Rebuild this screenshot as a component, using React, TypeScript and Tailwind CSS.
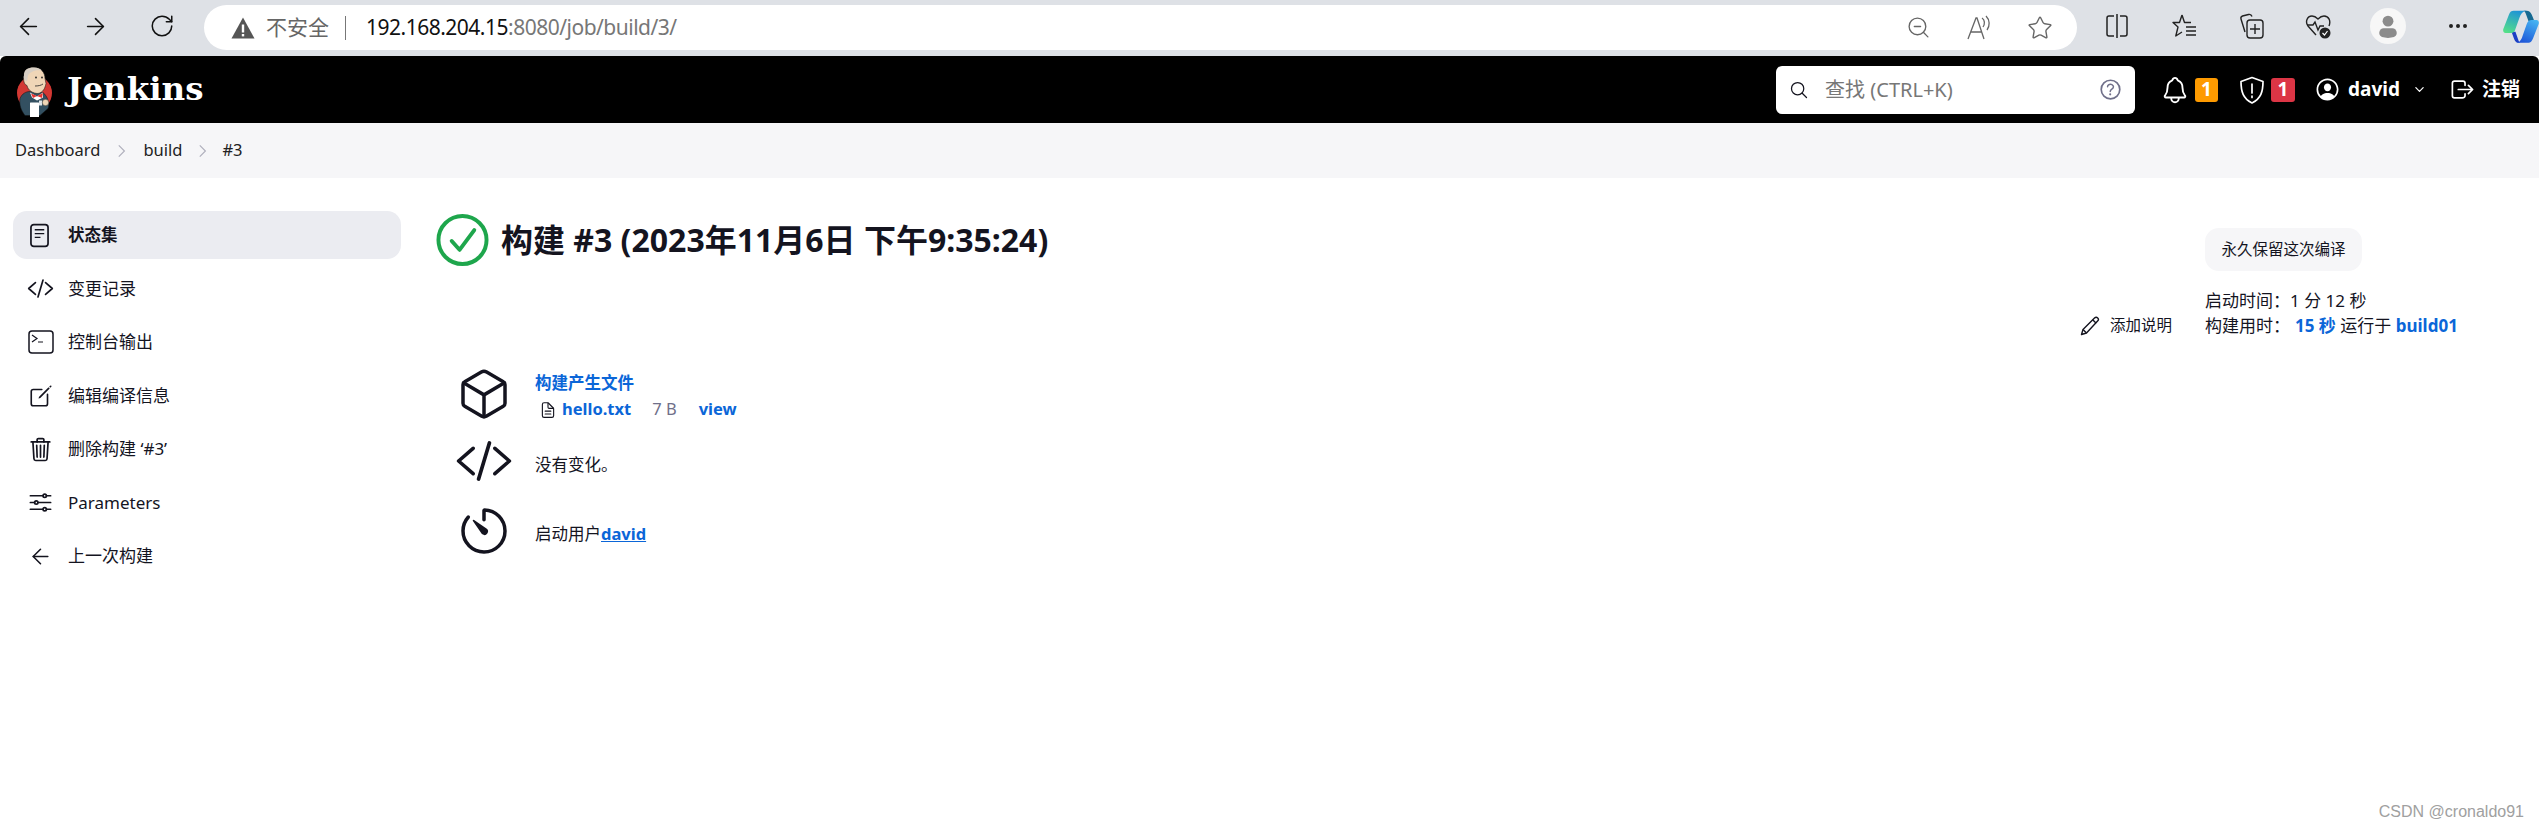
import { ArrowLeft, ArrowRight, RotateCw, ZoomOut, Star, MoreHorizontal } from "lucide-react";
import {
  IoCodeSlashOutline,
  IoCreateOutline,
  IoTrashOutline,
  IoOptionsOutline,
  IoCubeOutline,
  IoTimerOutline,
  IoSearchOutline,
  IoNotificationsOutline,
  IoPersonCircleOutline,
  IoChevronDownOutline,
  IoLogOutOutline,
  IoHelpCircleOutline,
  IoDocumentTextOutline,
} from "react-icons/io5";

const font = "font-['Noto_Sans','Noto_Sans_CJK_SC',sans-serif]";

function JenkinsLogo() {
  return (
    <svg viewBox="5 2.500 40 54" className="h-[54px] w-[40px]">
      <circle cx="24.500" cy="32.500" r="17.500" fill="#d33833" />
      <path d="M10 38c2-5 6-7 10-7l13 1c5 4 7 12 5 16l-8 7H15c-4-5-6-11-5-17z" fill="#335061" stroke="#111" strokeWidth=".5" />
      <path d="M14 15c0-6 4-8 10-8 7 0 11 5 11 11l1 5c-1 5-3 9-8 10-5 0-10-3-11-8-3-1-4-5-3-10z" fill="#f0d6b7" stroke="#222" strokeWidth=".6" />
      <path d="M14 15c0-6 4-8 10-8 3 0 6 1 8 3-6-1-12 1-14 5l-1 6c-2-1-4-3-3-6z" fill="#d8cfc4" />
      <circle cx="26" cy="17" r=".9" fill="#222" />
      <circle cx="32" cy="17" r=".9" fill="#222" />
      <path d="M25 25.500c3 0 6-.5 8-2" stroke="#222" strokeWidth=".8" fill="none" />
      <path d="M20 32l7 4 6-4v5l-6 3-5-3z" fill="#fff" />
      <path d="M21 33l6 2.500 6-3-1 5-5-2-4 2z" fill="#e8322e" />
      <rect x="20" y="42" width="9" height="15" rx=".5" fill="#fff" />
      <rect x="29" y="40" width="3" height="5" fill="#dfe5ea" />
      <circle cx="35.500" cy="42" r="3.200" fill="#f0d6b7" stroke="#222" strokeWidth=".4" />
    </svg>
  );
}

function Copilot() {
  return (
    <svg viewBox="0 0 110 100" className="h-[33px] w-[36px]">
      <defs>
        <linearGradient id="cpa" x1="0.600" y1="0" x2="0.200" y2="1">
          <stop offset="0" stopColor="#1f94d6" />
          <stop offset="1" stopColor="#55e088" />
        </linearGradient>
        <linearGradient id="cpb" x1="0.800" y1="0" x2="0.300" y2="1">
          <stop offset="0" stopColor="#45b4f2" />
          <stop offset="1" stopColor="#1d55d8" />
        </linearGradient>
      </defs>
      <path d="M62 2h10c8 0 12 4 16 12l8 20H78L70 12c-2-6-4-9-8-10z" fill="#176a92" />
      <path d="M26 66h12l10 28c1 3 4 6 8 6H48c-6 0-11-3-14-12z" fill="#1c3fc4" />
      <path d="M32 2h40C60 4 54 12 50 24L38 58c-2 8-6 12-14 12H8C2 70-1 64 1 58L18 14C22 5 26 2 32 2z" fill="url(#cpa)" />
      <path d="M78 100H40c12-2 16-10 20-22l12-34c3-10 8-14 16-14h14c6 0 9 6 7 12L92 86c-4 10-8 14-14 14z" fill="url(#cpb)" />
    </svg>
  );
}

function BrowserBar() {
  return (
    <div className="flex h-[56px] shrink-0 items-start bg-[#dee1e6] pl-[15px]">
      <div className="flex h-[52px] items-center gap-[40px] text-[#111]">
        <ArrowLeft size={27} strokeWidth={1.4} />
        <ArrowRight size={27} strokeWidth={1.4} />
        <RotateCw size={26} strokeWidth={1.4} />
      </div>
      <div className="ml-[29px] mt-[5px] flex h-[45px] w-[1873px] items-center rounded-full bg-white pl-[27px] pr-[24px]">
        <svg viewBox="0 0 24 24" className="h-[24px] w-[24px] text-[#555]" fill="currentColor">
          <path d="M12 1.5 23.5 22.5H.5z" />
          <rect x="10.8" y="8.5" width="2.4" height="8" fill="#fff" />
          <rect x="10.8" y="18" width="2.4" height="2.4" fill="#fff" />
        </svg>
        <span className="ml-[11px] text-[21px] text-[#666]">不安全</span>
        <span className="ml-[16px] h-[24px] w-px bg-[#777]" />
        <span className="ml-[20px] text-[21px] tracking-[-0.5px] text-[#777]">
          <span className="text-[#111]">192.168.204.15</span>:8080/job/build/3/
        </span>
        <div className="ml-auto flex items-center gap-[35px] text-[#666]">
          <ZoomOut size={25} strokeWidth={1.3} />
          <span className="flex h-[26px] w-[26px] items-center justify-center">
            <svg viewBox="0 0 26 26" className="h-[26px] w-[26px]" fill="none" stroke="currentColor" strokeWidth="1.3">
              <path d="M2 24 10 3h1l7 21M5 17h11" />
              <path d="M16 3c3 2 3 6 1 9M20 1c4 4 4 10 1 14" />
            </svg>
          </span>
          <Star size={26} strokeWidth={1.3} />
        </div>
      </div>
      <div className="flex h-[52px] flex-1 items-center text-[#222]">
        <div className="ml-[27px] flex items-center gap-[41px]">
          <svg viewBox="0 0 26 26" className="h-[26px] w-[26px]" fill="none" stroke="currentColor" strokeWidth="1.5">
            <path d="M10 3H5a2 2 0 0 0-2 2v16a2 2 0 0 0 2 2h5M16 3h5a2 2 0 0 1 2 2v16a2 2 0 0 1-2 2h-5M13 1v24" />
          </svg>
          <svg viewBox="0 0 26 26" className="h-[26px] w-[26px]" fill="none" stroke="currentColor" strokeWidth="1.4">
            <path d="M11 2 8.500 9.500H2l5 4.500L4.800 23l6.200-4M11 2l2.500 7.500H20" strokeLinejoin="round" />
            <path d="M15 14h10M15 18h10M15 22h10" />
          </svg>
          <svg viewBox="0 0 26 26" className="h-[26px] w-[26px]" fill="none" stroke="currentColor" strokeWidth="1.4">
            <path d="M7 19 3 6c-.4-1.400.3-2.500 1.500-3l6-1.500c2-.5 3 .5 3.500 2" />
            <rect x="9" y="7" width="16" height="18" rx="3" />
            <path d="M17 11v10M12 16h10" />
          </svg>
          <svg viewBox="0 0 26 26" className="h-[26px] w-[26px]" fill="none" stroke="currentColor" strokeWidth="1.4">
            <path d="M11 22 3 13C0 9 2 3 7 3c3 0 5 2 6 3 1-1 3-3 6-3 5 0 7 5 5 10" />
            <path d="M2 12h6l2-3 3 8 2-4h4" />
            <circle cx="20" cy="20" r="5.500" fill="#222" stroke="none" />
            <path d="M17.500 20l2 2 3-4" stroke="#fff" strokeWidth="1.2" />
          </svg>
        </div>
        <div className="ml-[39px] flex h-[36px] w-[36px] items-center justify-center rounded-full bg-[#f7f7f7]">
          <svg viewBox="0 0 24 24" className="h-[26px] w-[26px]" fill="#8b8b8b">
            <circle cx="12" cy="7.500" r="5" />
            <path d="M4 18a4 4 0 0 1 4-4h8a4 4 0 0 1 4 4v1c0 3-4 4-8 4s-8-1-8-4z" />
          </svg>
        </div>
        <MoreHorizontal size={24} strokeWidth={2} className="ml-[40px]" />
        <div className="ml-[33px]">
          <Copilot />
        </div>
      </div>
    </div>
  );
}

function JenkinsHeader() {
  return (
    <header className="flex h-[67px] shrink-0 items-center rounded-t-[6px] bg-black pl-[15px] text-white">
      <JenkinsLogo />
      <span className="ml-[12px] font-['DejaVu_Serif',serif] text-[32.500px] font-bold leading-none">Jenkins</span>
      <div className="ml-auto flex h-[48px] w-[359px] items-center rounded-[6px] bg-white pl-[13px] pr-[11px]">
        <IoSearchOutline className="h-[20px] w-[20px] text-[#14141f]" />
        <span className="ml-[16px] text-[20px] text-[#777]">查找 (CTRL+K)</span>
        <IoHelpCircleOutline className="ml-auto h-[27px] w-[27px] text-[#70708a]" />
      </div>
      <div className="ml-[25px] flex items-center pr-[19px]">
        <IoNotificationsOutline className="h-[30px] w-[30px]" />
        <span className="ml-[5px] flex h-[24px] w-[23px] items-center justify-center rounded-[3px] bg-[#fe9a00] text-[19px] font-bold">1</span>
        <svg viewBox="0 0 26 28" className="ml-[21px] h-[28px] w-[26px]" fill="none" stroke="currentColor" strokeWidth="1.700">
          <path d="M13 1.500 24 5.500c0 10-2 17-11 21.500C4 22.500 2 15.500 2 5.500z" strokeLinejoin="round" />
          <path d="M13 8v9M13 20v1.500" strokeLinecap="round" />
        </svg>
        <span className="ml-[6px] flex h-[24px] w-[24px] items-center justify-center rounded-[3px] bg-[#dc3545] text-[19px] font-bold">1</span>
        <IoPersonCircleOutline className="ml-[19px] h-[27px] w-[27px]" />
        <span className="ml-[7px] text-[19px] font-bold">david</span>
        <IoChevronDownOutline className="ml-[13px] h-[13px] w-[13px]" />
        <IoLogOutOutline className="ml-[23px] h-[27px] w-[27px] -scale-x-100 rotate-180" />
        <span className="ml-[6px] text-[19px] font-bold">注销</span>
      </div>
    </header>
  );
}

function Breadcrumbs() {
  return (
    <nav className="flex h-[55px] shrink-0 items-center bg-[#f6f6f8] pl-[15px] text-[16.500px] text-[#222]">
      <span>Dashboard</span>
      <svg viewBox="0 0 10 16" className="ml-[18px] h-[14px] w-[8px]" fill="none" stroke="#b0b0bd" strokeWidth="1.500"><path d="M1 1l7 7-7 7" /></svg>
      <span className="ml-[17px]">build</span>
      <svg viewBox="0 0 10 16" className="ml-[17px] h-[14px] w-[8px]" fill="none" stroke="#b0b0bd" strokeWidth="1.500"><path d="M1 1l7 7-7 7" /></svg>
      <span className="ml-[15px]">#3</span>
    </nav>
  );
}

const tasks = [
  { label: "变更记录", icon: <IoCodeSlashOutline className="h-[27px] w-[27px]" /> },
  {
    label: "控制台输出",
    icon: (
      <svg viewBox="0 0 26 26" className="h-[26px] w-[26px]" fill="none" stroke="currentColor" strokeWidth="1.500">
        <rect x="1" y="2" width="24" height="22" rx="3" />
        <path d="M4 6l5 3.500-5 3.500M10 13h5" strokeWidth="1.200" />
      </svg>
    ),
  },
  { label: "编辑编译信息", icon: <IoCreateOutline className="h-[26px] w-[26px]" /> },
  { label: "删除构建 ‘#3’", icon: <IoTrashOutline className="h-[27px] w-[27px]" /> },
  { label: "Parameters", icon: <IoOptionsOutline className="h-[27px] w-[27px]" /> },
  { label: "上一次构建", icon: <ArrowLeft size={25} strokeWidth={1.5} /> },
];

function Sidebar() {
  return (
    <aside className="ml-[13px] w-[388px] shrink-0 pt-[33px] text-[#14141f]">
      <div className="flex h-[48px] items-center rounded-[14px] bg-[#ebecf1]">
        <span className="flex w-[55px] justify-center">
          <svg viewBox="0 0 20 26" className="ml-[-2px] h-[25px] w-[19px]" fill="none" stroke="currentColor" strokeWidth="1.800">
            <rect x="1" y="1.500" width="18" height="23" rx="3" />
            <path d="M5 7h10M5 11h10M5 15h6" strokeWidth="1.500" />
          </svg>
        </span>
        <span className="text-[16.500px] font-bold">状态集</span>
      </div>
      {tasks.map((t) => (
        <div key={t.label} className="mt-[5.500px] flex h-[48px] items-center">
          <span className="flex w-[55px] justify-center">{t.icon}</span>
          <span className="text-[17px]">{t.label}</span>
        </div>
      ))}
    </aside>
  );
}

function BuildTitle() {
  return (
    <div className="flex items-center pt-[35px]">
      <svg viewBox="0 0 54 54" className="h-[54px] w-[53px]" fill="none" stroke="#1ea64c" strokeWidth="4">
        <circle cx="27" cy="27" r="24.500" />
        <path d="M16 28l8 9 15-20" strokeWidth="4" strokeLinecap="round" strokeLinejoin="round" />
      </svg>
      <h1 className="ml-[12px] text-[32px] font-bold leading-none text-[#14141f]">构建 #3 (2023年11月6日 下午9:35:24)</h1>
    </div>
  );
}

function Details() {
  const blue = "text-[#0b66d8]";
  return (
    <div className="mt-[100px] text-[16.500px] text-[#14141f]">
      <div className="flex h-[54px] items-center">
        <span className="flex w-[96px] justify-center">
          <IoCubeOutline className="h-[56px] w-[56px]" />
        </span>
        <div className="ml-[3px] pt-[4px] font-bold">
          <div className={`leading-[27px] ${blue}`}>构建产生文件</div>
          <div className="flex h-[27px] items-center pl-[4px]">
            <IoDocumentTextOutline className="h-[18px] w-[18px] font-normal" />
            <span className={`ml-[5px] ${blue}`}>hello.txt</span>
            <span className="ml-[21px] font-normal text-[#70708a]">7 B</span>
            <span className={`ml-[22px] ${blue}`}>view</span>
          </div>
        </div>
      </div>
      <div className="mt-[13px] flex h-[54px] items-center">
        <span className="flex w-[96px] justify-center">
          <IoCodeSlashOutline className="h-[58px] w-[58px]" />
        </span>
        <span className="ml-[3px] pt-[8px]">没有变化。</span>
      </div>
      <div className="mt-[16px] flex h-[54px] items-center">
        <span className="flex w-[96px] justify-center">
          <IoTimerOutline className="h-[56px] w-[56px]" />
        </span>
        <span className="ml-[3px] pt-[6px]">
          启动用户<a className={`font-bold underline ${blue}`}>david</a>
        </span>
      </div>
    </div>
  );
}

function BuildAside() {
  return (
    <div className="mr-[81px] flex items-end pt-[50px] text-[15.500px] text-[#14141f]">
      <div className="flex h-[25px] items-center">
        <svg viewBox="0 0 20 20" className="h-[20px] w-[20px]" fill="none" stroke="currentColor" strokeWidth="1.400" strokeLinejoin="round">
          <path d="M1.500 18.500 3 13.500 14.500 2c1-1 2.300-1 3.200-.1.900.9.900 2.200-.1 3.200L6.500 17z" />
          <path d="M12.700 3.800l3.500 3.500M3 13.500l3.500 3.500" />
        </svg>
        <span className="ml-[10px]">添加说明</span>
      </div>
      <div className="ml-[33px] w-[253px]">
        <div className="flex h-[43px] w-[157px] items-center justify-center rounded-[14px] bg-[#f6f6f8]">永久保留这次编译</div>
        <div className="mt-[17px] h-[25px] whitespace-nowrap text-[17px] leading-[25px]">启动时间：1 分 12 秒</div>
        <div className="h-[25px] whitespace-nowrap text-[17px] leading-[25px]">
          构建用时：<span className="ml-[5px] font-bold text-[#0b66d8]">15 秒</span> 运行于 <span className="font-bold text-[#0b66d8]">build01</span>
        </div>
      </div>
    </div>
  );
}

export default function App() {
  return (
    <div className={`relative flex h-[830px] flex-col overflow-hidden bg-white ${font}`}>
      <BrowserBar />
      <JenkinsHeader />
      <Breadcrumbs />
      <div className="flex flex-1">
        <Sidebar />
        <main className="ml-[35px] flex flex-1 items-start justify-between">
          <div>
            <BuildTitle />
            <Details />
          </div>
          <BuildAside />
        </main>
      </div>
      <span className="absolute bottom-[6px] right-[15px] font-['Liberation_Sans',sans-serif] text-[16px] text-[#a0a0a0]">CSDN @cronaldo91</span>
    </div>
  );
}
